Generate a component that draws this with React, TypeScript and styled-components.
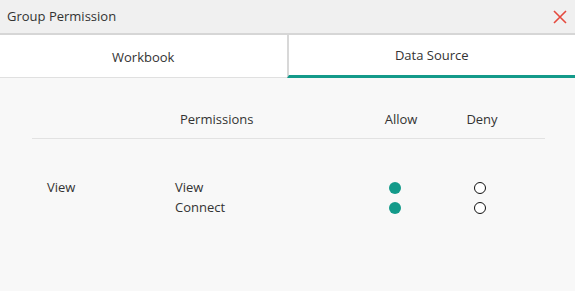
import { useState } from "react";
import styled, { createGlobalStyle } from "styled-components";

const GlobalStyle = createGlobalStyle`
  html, body {
    margin: 0;
    padding: 0;
    background: #f8f8f8;
  }
  body {
    font-family: "Open Sans", "Liberation Sans", sans-serif;
    font-size: 13px;
    color: #333;
  }
`;

export const DialogWrapper = styled.div`
  display: flex;
  flex-direction: column;
  width: 575px;
  height: 291px;
  background: #f8f8f8;
  overflow: hidden;
`;

export const TitleBar = styled.div`
  display: flex;
  align-items: center;
  justify-content: space-between;
  height: 33px;
  padding: 0 5px 0 7px;
  background: #f0f0f0;
  border-bottom: 2px solid #d6d6d6;
`;

export const Title = styled.div`
  font-size: 13px;
  color: #333;
  padding-bottom: 2px;
`;

export const CloseBtn = styled.button`
  display: flex;
  align-items: center;
  justify-content: center;
  width: 20px;
  height: 20px;
  padding: 0;
  border: 0;
  background: transparent;
  cursor: pointer;
  margin-top: 1px;
`;

export const TabBar = styled.div`
  display: flex;
  height: 43px;
  background: #fff;
`;

export const Tab = styled.div<{ $active?: boolean }>`
  flex: 1;
  display: flex;
  align-items: center;
  justify-content: center;
  font-size: 13px;
  color: #333;
  cursor: pointer;
  padding-top: ${(props) => (props.$active ? "0" : "1px")};
  border-bottom: ${(props) =>
    props.$active ? "3px solid #139a8a" : "1px solid #e0e0e0"};
  & + & {
    border-left: 2px solid #d8d8d8;
  }
`;

export const Content = styled.div`
  padding: 30px 30px 0 32px;
`;

const Grid = styled.div`
  display: grid;
  grid-template-columns: 143px 185px 82px 80px 1fr;
  line-height: 20px;
`;

export const HeadRow = styled(Grid)`
  padding-bottom: 9px;
  border-bottom: 1px solid #e2e2e2;
`;

export const HeadCell = styled.div<{ $center?: boolean; $pad?: number }>`
  text-align: ${(props) => (props.$center ? "center" : "left")};
  padding-left: ${(props) => props.$pad ?? 0}px;
  padding-top: 1px;
`;

export const Body = styled(Grid)`
  margin-top: 38px;
`;

export const Cell = styled.div<{ $pad?: number }>`
  padding-left: ${(props) => props.$pad ?? 0}px;
`;

export const RadioCol = styled.div<{ $shift: number }>`
  display: flex;
  flex-direction: column;
  align-items: center;
  padding-right: ${(props) => props.$shift}px;
`;

export const RadioSlot = styled.div`
  box-sizing: border-box;
  height: 20px;
  display: flex;
  align-items: center;
  padding-top: 2px;
`;

export const Radio = styled.span<{ $on?: boolean }>`
  display: block;
  box-sizing: border-box;
  width: 12px;
  height: 12px;
  border-radius: 50%;
  background: ${(props) => (props.$on ? "#139a8a" : "#fff")};
  border: ${(props) => (props.$on ? "none" : "1.5px solid #111")};
  cursor: pointer;
`;

const rows = ["View", "Connect"];

function App() {
  const [tab, setTab] = useState(1);
  const [allow, setAllow] = useState<Record<string, boolean>>({
    View: true,
    Connect: true,
  });

  return (
    <>
      <GlobalStyle />
      <DialogWrapper>
        <TitleBar>
          <Title>Group Permission</Title>
          <CloseBtn aria-label="close">
            <svg width="14" height="14" viewBox="0 0 14 14">
              <path
                d="M1 1 L13 13 M13 1 L1 13"
                stroke="#e5493e"
                strokeWidth="1.6"
                fill="none"
              />
            </svg>
          </CloseBtn>
        </TitleBar>
        <TabBar>
          <Tab $active={tab === 0} onClick={() => setTab(0)}>
            Workbook
          </Tab>
          <Tab $active={tab === 1} onClick={() => setTab(1)}>
            Data Source
          </Tab>
        </TabBar>
        <Content>
          <HeadRow>
            <HeadCell />
            <HeadCell $pad={5}>Permissions</HeadCell>
            <HeadCell $center>Allow</HeadCell>
            <HeadCell $center>Deny</HeadCell>
            <HeadCell />
          </HeadRow>
          <Body>
            <Cell $pad={15}>View</Cell>
            <div>
              {rows.map((r) => (
                <Cell key={r}>{r}</Cell>
              ))}
            </div>
            <RadioCol $shift={12}>
              {rows.map((r) => (
                <RadioSlot key={r}>
                  <Radio
                    $on={allow[r]}
                    onClick={() => setAllow({ ...allow, [r]: true })}
                  />
                </RadioSlot>
              ))}
            </RadioCol>
            <RadioCol $shift={4}>
              {rows.map((r) => (
                <RadioSlot key={r}>
                  <Radio
                    $on={!allow[r]}
                    onClick={() => setAllow({ ...allow, [r]: false })}
                  />
                </RadioSlot>
              ))}
            </RadioCol>
            <div />
          </Body>
        </Content>
      </DialogWrapper>
    </>
  );
}

export default App;
